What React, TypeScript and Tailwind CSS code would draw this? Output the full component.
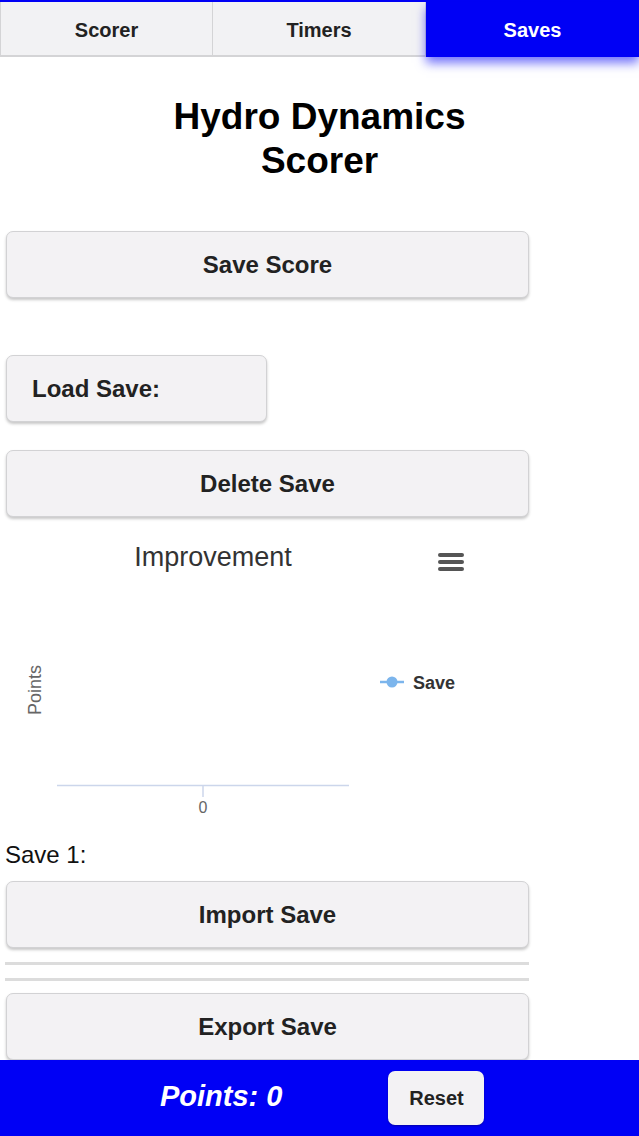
import React from "react";

const font = { fontFamily: '"Liberation Sans", Arial, Helvetica, sans-serif' };

function Btn({ children, className = "" }: { children: React.ReactNode; className?: string }) {
  return (
    <button
      className={
        "h-[67px] rounded-[7px] border border-[#d2d2d4] bg-[#f3f2f4] text-[24px] font-bold text-[#222] shadow-[0_2px_3px_rgba(0,0,0,0.22)] " +
        className
      }
    >
      {children}
    </button>
  );
}

export default function App() {
  return (
    <div className="min-h-[1136px] bg-white pb-[80px]" style={font}>
      {/* Tabs */}
      <div className="flex h-[57px] border-t-2 border-[#0000f5]">
        <div className="flex w-[213px] items-center justify-center border-b-2 border-r border-l border-[#d4d4d6] bg-[#f2f2f4] pt-[2px] text-[20px] font-bold text-[#222]">
          Scorer
        </div>
        <div className="flex w-[213px] items-center justify-center border-b-2 border-r border-[#d4d4d6] bg-[#f2f2f4] pt-[2px] text-[20px] font-bold text-[#222]">
          Timers
        </div>
        <div className="flex flex-1 items-center justify-center bg-[#0000f5] text-[20px] font-bold text-white shadow-[0_6px_10px_rgba(0,0,245,0.55)]">
          Saves
        </div>
      </div>

      {/* Title */}
      <h1 className="mt-[38px] text-center text-[37px] font-bold leading-[44px] text-black">
        Hydro Dynamics
        <br />
        Scorer
      </h1>

      <div className="px-[6px]">
        <Btn className="mt-[48px] w-[523px]">Save Score</Btn>
        <div>
          <Btn className="mt-[57px] w-[261px] pl-[25px] text-left">Load Save:</Btn>
        </div>
        <Btn className="mt-[28px] w-[523px]">Delete Save</Btn>
      </div>

      {/* Chart */}
      <svg width="530" height="310" className="mt-[8px] block" style={font}>
        <text x="213" y="41" textAnchor="middle" fontSize="27" fill="#333">
          Improvement
        </text>
        <g stroke="#555" strokeWidth="4" strokeLinecap="round">
          <line x1="440" y1="30" x2="462" y2="30" />
          <line x1="440" y1="37" x2="462" y2="37" />
          <line x1="440" y1="44" x2="462" y2="44" />
        </g>
        <text
          x="35"
          y="165"
          textAnchor="middle"
          dominantBaseline="central"
          fontSize="18"
          fill="#666"
          transform="rotate(-90 35 165)"
        >
          Points
        </text>
        <line x1="380" y1="157" x2="404" y2="157" stroke="#7cb5ec" strokeWidth="2.5" />
        <circle cx="392" cy="157" r="5.5" fill="#7cb5ec" />
        <text x="413" y="163.5" fontSize="18" fontWeight="bold" fill="#333">
          Save
        </text>
        <line x1="57" y1="260.5" x2="349" y2="260.5" stroke="#ccd6eb" strokeWidth="1.5" />
        <line x1="203" y1="260" x2="203" y2="272" stroke="#ccd6eb" strokeWidth="1.5" />
        <text x="203" y="288" textAnchor="middle" fontSize="16" fill="#666">
          0
        </text>
      </svg>

      <div className="px-[6px]">
        <div className="mt-[6px] -ml-px text-[24px] leading-[28px] text-[#111]">Save 1:</div>
        <Btn className="mt-[12px] w-[523px]">Import Save</Btn>
        <div className="mt-[14px] h-[3px] w-[524px] -ml-px bg-[#dcdcdc]" />
        <div className="mt-[13px] h-[3px] w-[524px] -ml-px bg-[#dcdcdc]" />
        <Btn className="mt-[12px] w-[523px]">Export Save</Btn>
      </div>

      {/* Footer */}
      <div className="fixed bottom-0 left-0 right-0 flex h-[76px] items-center bg-[#0000f5] pl-[160px]">
        <span className="-mt-[2px] text-[29px] font-bold italic text-white">Points: 0</span>
        <button className="ml-[106px] h-[54px] w-[96px] rounded-[7px] bg-[#f3f2f4] text-[20px] font-bold text-[#222] shadow-[0_1px_2px_rgba(0,0,0,0.3)]">
          Reset
        </button>
      </div>
    </div>
  );
}
